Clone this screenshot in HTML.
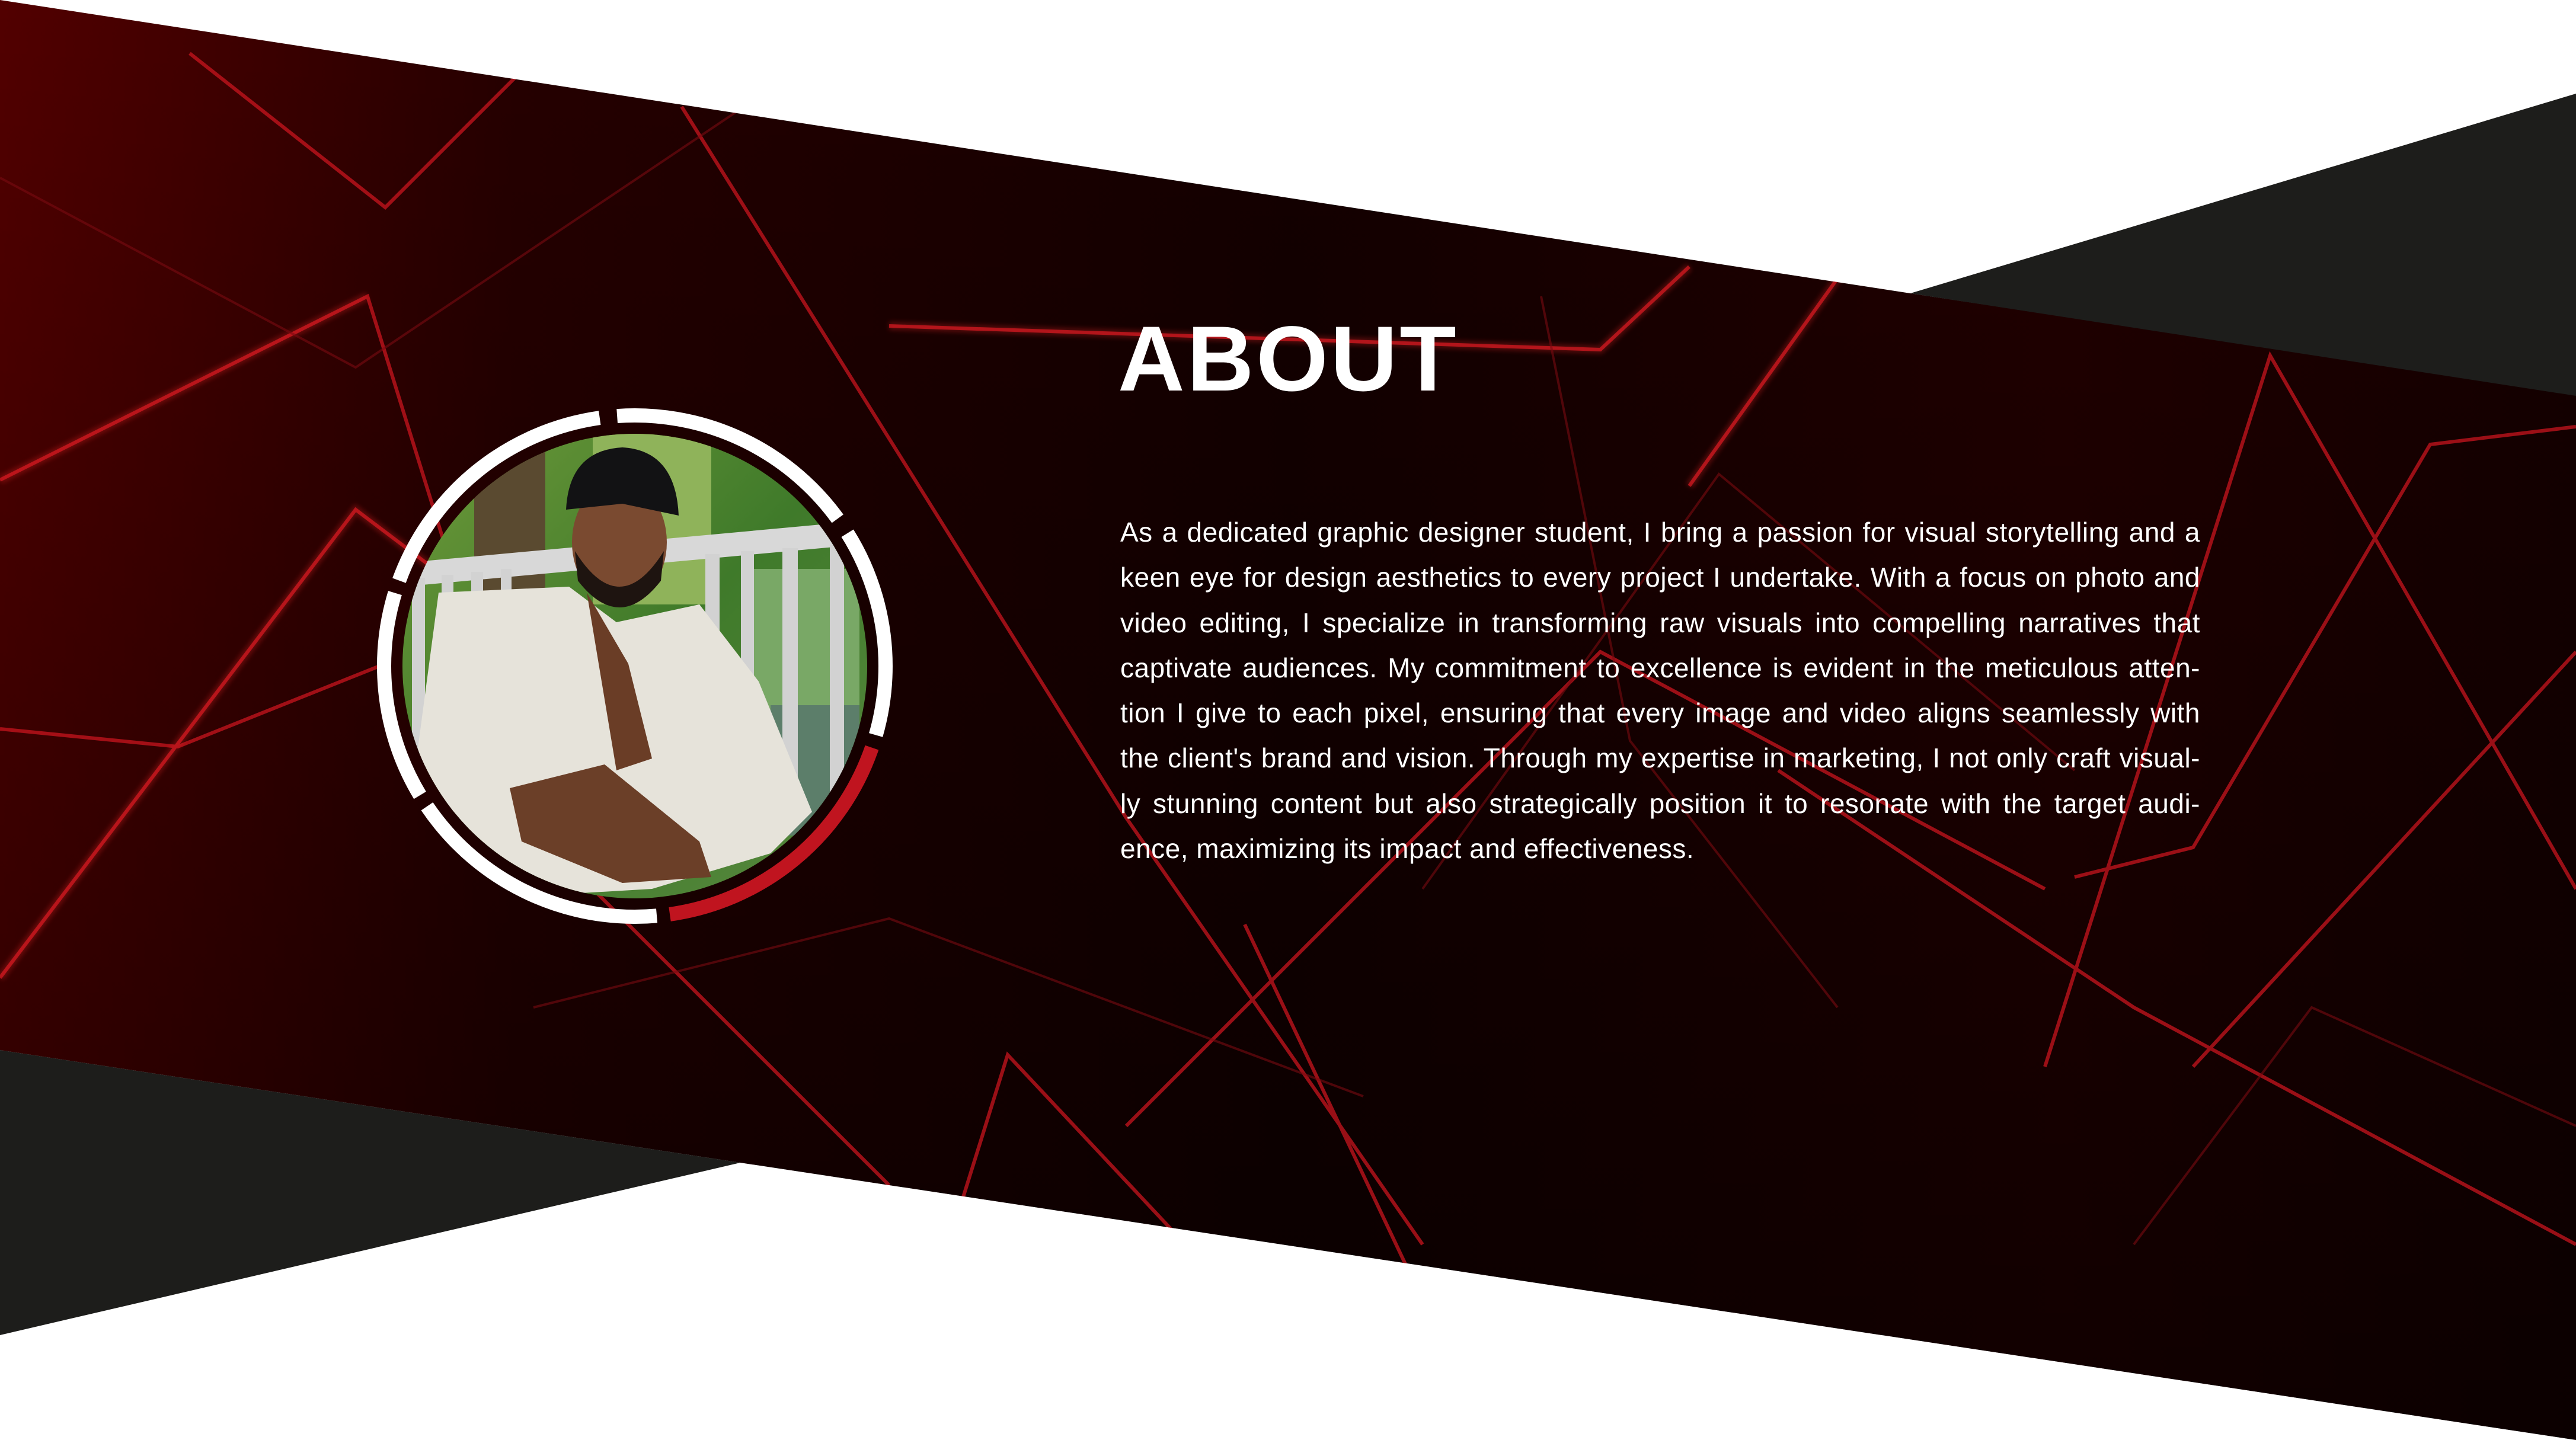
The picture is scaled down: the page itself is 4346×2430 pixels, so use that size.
<!DOCTYPE html>
<html><head><meta charset="utf-8"><style>
html,body{margin:0;padding:0;background:#fff;}
body{width:4346px;height:2430px;position:relative;overflow:hidden;font-family:"Liberation Sans",sans-serif;}
svg.bg{position:absolute;left:0;top:0;}
h1{position:absolute;left:1886px;top:528px;margin:0;font-size:156px;font-weight:bold;color:#fff;letter-spacing:4px;line-height:1;}
.p{position:absolute;left:1890px;top:860px;width:1822px;color:#fff;font-size:46px;letter-spacing:0.5px;line-height:76.3px;}
.p div{text-align:justify;text-align-last:justify;white-space:nowrap;}
.p div.l{text-align-last:left;}
</style></head><body>
<svg class="bg" width="4346" height="2430" viewBox="0 0 4346 2430">
<defs>
<linearGradient id="g1" x1="0" y1="0" x2="1" y2="0">
<stop offset="0" stop-color="#520000"/><stop offset="0.2" stop-color="#260000"/><stop offset="0.5" stop-color="#140000"/><stop offset="0.8" stop-color="#220000"/><stop offset="1" stop-color="#160000"/>
</linearGradient>
<linearGradient id="g2" x1="0" y1="0" x2="0" y2="1">
<stop offset="0" stop-color="#000" stop-opacity="0"/><stop offset="0.7" stop-color="#000" stop-opacity="0.35"/><stop offset="1" stop-color="#000" stop-opacity="0.5"/>
</linearGradient>
<clipPath id="band"><polygon points="0,0 3223,495 4346,665 4346,2430 1249,1962 0,1772"/></clipPath>
<clipPath id="ph"><circle cx="1071" cy="1124" r="392"/></clipPath>
<linearGradient id="leaf" x1="0" y1="0" x2="1" y2="1"><stop offset="0" stop-color="#6f9a3a"/><stop offset="0.5" stop-color="#3f7a2a"/><stop offset="1" stop-color="#5a8a40"/></linearGradient>
<filter id="gl"><feGaussianBlur stdDeviation="4"/></filter>
</defs>
<polygon points="0,0 3223,495 4346,665 4346,2430 1249,1962 0,1772" fill="url(#g1)"/>
<g clip-path="url(#band)" fill="none" stroke-linejoin="miter">
<rect x="0" y="0" width="4346" height="2430" fill="url(#g2)"/>
<g stroke="#c8141e" stroke-width="6" opacity="0.75">
<polyline points="0,810 620,500 900,1400 1500,2000"/>
<polyline points="0,1650 600,860 1050,1200"/>
<polyline points="320,90 650,350 900,100"/>
<polyline points="1150,180 1900,1380 2400,2100"/>
<polyline points="1500,550 2700,590 2850,450"/>
<polyline points="2850,820 3200,330 3400,200"/>
<polyline points="1900,1900 2700,1100 3450,1500"/>
<polyline points="3450,1800 3830,600 4346,1500"/>
<polyline points="3500,1480 3700,1430 4100,750 4346,720"/>
<polyline points="1600,2100 1700,1780 2000,2100"/>
<polyline points="2100,1560 2450,2300"/>
<polyline points="3000,1300 3600,1700 4346,2100"/>
<polyline points="0,1230 300,1260 650,1120"/>
<polyline points="3700,1800 4346,1100"/>
</g>
<g stroke="#ff2a2a" stroke-width="14" opacity="0.25" filter="url(#gl)">
<polyline points="0,1650 600,860 1050,1200"/>
<polyline points="1500,550 2700,590 2850,450"/>
<polyline points="2850,820 3200,330 3400,200"/>
<polyline points="0,810 620,500"/>
</g>
<g stroke="#7a0a10" stroke-width="4" opacity="0.6">
<polyline points="0,300 600,620 1300,150"/>
<polyline points="2400,1500 2900,800 3500,1300"/>
<polyline points="900,1700 1500,1550 2300,1850"/>
<polyline points="3600,2100 3900,1700 4346,1900"/>
<polyline points="2600,500 2750,1250 3100,1700"/>
</g>
</g>
<polygon points="3223,495 4346,158 4346,668" fill="#1d1d1b"/>
<polygon points="0,1772 1249,1962 0,2253" fill="#1d1d1b"/>
<g clip-path="url(#ph)">
<rect x="670" y="720" width="810" height="810" fill="url(#leaf)"/>
<rect x="1000" y="720" width="200" height="300" fill="#8fb35a"/>
<rect x="800" y="760" width="120" height="400" fill="#5a4a30"/>
<rect x="1270" y="960" width="180" height="300" fill="#79a866"/>
<rect x="1300" y="1190" width="150" height="220" fill="#5c7e6a"/>
<polygon points="680,950 1440,880 1440,920 680,990" fill="#d8d8d8"/>
<g fill="#d2d2d2">
<rect x="695" y="975" width="22" height="400"/><rect x="745" y="970" width="20" height="400"/><rect x="795" y="965" width="20" height="300"/><rect x="845" y="960" width="18" height="300"/>
<rect x="1190" y="935" width="24" height="450"/><rect x="1250" y="930" width="22" height="450"/><rect x="1320" y="925" width="26" height="450"/><rect x="1400" y="920" width="24" height="450"/>
</g>
<path d="M740,1000 L960,990 L1040,1050 L1180,1020 L1280,1150 L1370,1370 L1300,1440 L1100,1500 L760,1520 L700,1300 Z" fill="#e6e3da"/>
<path d="M860,1330 L1020,1290 L1180,1420 L1200,1480 L1050,1490 L880,1420 Z" fill="#6b3f28"/>
<path d="M990,1000 L1060,1120 L1100,1280 L1040,1300 L1010,1120 Z" fill="#6a3d26"/>
<ellipse cx="1045" cy="915" rx="80" ry="105" fill="#7a4a30"/>
<path d="M970,930 Q1045,1050 1120,930 L1115,980 Q1045,1070 975,980 Z" fill="#1e1410"/>
<path d="M955,860 Q960,760 1050,755 Q1140,760 1145,870 L1050,850 Z" fill="#121214"/>
<rect x="1280" y="1510" width="200" height="30" fill="#fff"/>
</g>
<g transform="rotate(-90 1071 1124)" fill="none" stroke-width="24">
<circle cx="1071" cy="1124" r="423" pathLength="360" stroke="#fff" stroke-dasharray="58 302" stroke-dashoffset="4"/>
<circle cx="1071" cy="1124" r="423" pathLength="360" stroke="#fff" stroke-dasharray="48 312" stroke-dashoffset="-58"/>
<circle cx="1071" cy="1124" r="423" pathLength="360" stroke="#c0141f" stroke-dasharray="63 297" stroke-dashoffset="-109"/>
<circle cx="1071" cy="1124" r="423" pathLength="360" stroke="#fff" stroke-dasharray="61 299" stroke-dashoffset="-175"/>
<circle cx="1071" cy="1124" r="423" pathLength="360" stroke="#fff" stroke-dasharray="48 312" stroke-dashoffset="-239"/>
<circle cx="1071" cy="1124" r="423" pathLength="360" stroke="#fff" stroke-dasharray="62 298" stroke-dashoffset="-290"/>
</g>
</svg>
<h1>ABOUT</h1>
<div class="p">
<div>As a dedicated graphic designer student, I bring a passion for visual storytelling and a</div>
<div>keen eye for design aesthetics to every project I undertake. With a focus on photo and</div>
<div>video editing, I specialize in transforming raw visuals into compelling narratives that</div>
<div>captivate audiences. My commitment to excellence is evident in the meticulous atten-</div>
<div>tion I give to each pixel, ensuring that every image and video aligns seamlessly with</div>
<div>the client's brand and vision. Through my expertise in marketing, I not only craft visual-</div>
<div>ly stunning content but also strategically position it to resonate with the target audi-</div>
<div class="l">ence, maximizing its impact and effectiveness.</div>
</div>
</body></html>
